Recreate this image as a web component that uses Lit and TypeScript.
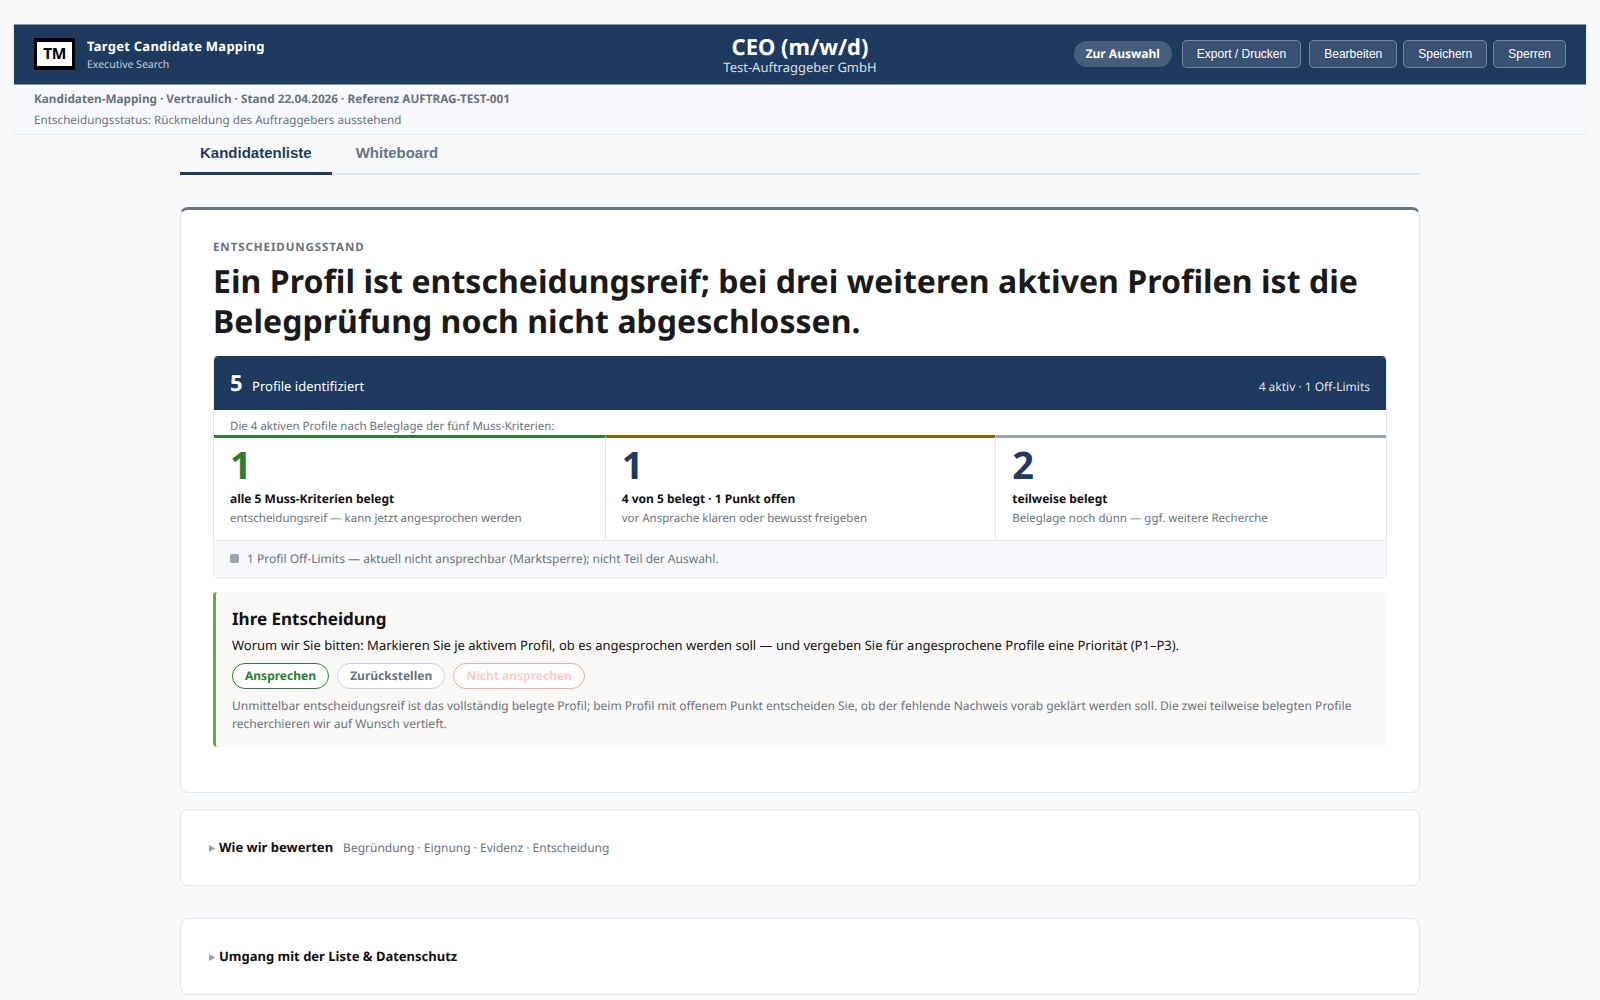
import { LitElement, html, css } from "lit";
import { customElement } from "lit/decorators.js";

const actions = ["Export / Drucken", "Bearbeiten", "Speichern", "Sperren"];

const tiers = [
  { count: 1, tone: "green", label: "alle 5 Muss-Kriterien belegt", note: "entscheidungsreif — kann jetzt angesprochen werden" },
  { count: 1, tone: "amber", label: "4 von 5 belegt · 1 Punkt offen", note: "vor Ansprache klären oder bewusst freigeben" },
  { count: 2, tone: "grey", label: "teilweise belegt", note: "Beleglage noch dünn — ggf. weitere Recherche" },
];

@customElement("app-root")
export class AppRoot extends LitElement {
  static styles = css`
    :host {
      display: block;
      box-sizing: border-box;
      height: 1000px;
      overflow: hidden;
      padding: 24px 14px 0;
      background: #f8fafc;
      color: #111;
      font-family: "Noto Sans", sans-serif;
      text-rendering: geometricPrecision;
    }
    * { box-sizing: border-box; }
    .top {
      display: grid;
      grid-template-columns: 1fr auto 1fr;
      align-items: center;
      height: 61px;
      padding: 0 20px 1px;
      border: solid #8496ac;
      border-width: 1px 0;
      background: #1e3a5f;
      color: #fff;
      box-shadow: 0 1px 3px rgba(15, 23, 42, 0.1);
    }
    .brand { display: flex; align-items: center; gap: 12px; }
    .brand-text { padding-top: 2px; }
    .logo {
      display: flex;
      align-items: center;
      justify-content: center;
      width: 41px;
      height: 32px;
      border: solid #000;
      border-width: 4px 3px;
      background: #fff;
      color: #000;
      font-size: 15.5px;
      font-weight: 700;
      line-height: 1;
      letter-spacing: -0.5px;
    }
    .brand-name { font-size: 13px; font-weight: 700; line-height: 18px; letter-spacing: 0.26px; }
    .brand-sub { margin-top: 1px; font-size: 10.5px; line-height: 18px; color: rgba(255, 255, 255, 0.75); }
    .mandate { padding-top: 3px; text-align: center; }
    .role { font-size: 22px; font-weight: 700; line-height: 24px; }
    .client { font-size: 13px; line-height: 17px; color: rgba(255, 255, 255, 0.85); }
    .actions { display: flex; align-items: center; justify-content: flex-end; gap: 6px; }
    .pill-link {
      margin-right: 4px;
      padding: 0 12px;
      border-radius: 14px;
      background: rgba(255, 255, 255, 0.18);
      font-size: 12px;
      font-weight: 700;
      line-height: 26px;
    }
    .action {
      height: 28px;
      padding: 0 14px;
      border: 1px solid rgba(255, 255, 255, 0.3);
      border-radius: 5px;
      background: rgba(255, 255, 255, 0.12);
      color: #fff;
      font: 12px "Liberation Sans", Arial, sans-serif;
    }
    .action:nth-of-type(1) { margin-right: 2px; }
    .meta {
      height: 50px;
      padding: 4px 20px 0;
      border-bottom: 1px solid #e2e8f0;
      background: #f7f9fc;
      color: #6b7280;
      font-size: 11.7px;
      line-height: 20.5px;
    }
    .meta-main { font-size: 11.75px; font-weight: 700; }
    .page { width: 1240px; margin: 0 auto; }
    .tabs { display: flex; gap: 4px; height: 40px; border-bottom: 2px solid #e2e8f0; }
    .tab {
      display: flex;
      align-items: flex-start;
      height: 40px;
      padding: 8px 20px 0;
      border: 0;
      background: none;
      color: #64748b;
      font: 700 15px/20px "Liberation Sans", Arial, sans-serif;
    }
    .tab.active { border-bottom: 3px solid #1e3a5f; color: #1e3a5f; }
    .card { border: 1px solid #e2e8f0; border-radius: 8px; background: #fff; }
    .status { margin-top: 32px; height: 586px; padding: 29px 32px 0; border-top: 3px solid #6b7280; }
    .eyebrow { color: #6b7280; font-size: 11.5px; font-weight: 700; line-height: 18px; letter-spacing: 0.93px; }
    .headline { margin: 5px 0 0; color: #1a1a1a; font-size: 32px; font-weight: 700; line-height: 40px; letter-spacing: 0.04px; }
    .funnel {
      height: 222px;
      margin-top: 14px;
      overflow: hidden;
      border: 1px solid #e2e8f0;
      border-top-color: #1e3a5f;
      border-radius: 5px;
    }
    .funnel-head {
      display: flex;
      align-items: baseline;
      height: 53px;
      padding: 11px 16px 0;
      background: #1e3a5f;
      color: #fff;
      line-height: 30px;
    }
    .total { font-size: 22px; font-weight: 700; }
    .total-label { margin-left: 9.5px; font-size: 13px; }
    .total-split { margin-left: auto; font-size: 12px; color: rgba(255, 255, 255, 0.88); }
    .funnel-intro { height: 25px; padding: 8px 16px 0; color: #6b7280; font-size: 11.5px; line-height: 17px; }
    .tiers { display: grid; grid-template-columns: repeat(3, 1fr); height: 105px; }
    .tier { padding: 8px 16px 0; border-top: 3px solid #9ca3af; }
    .tier + .tier { border-left: 1px solid #e2e8f0; }
    .tier.green { border-top-color: #2e7d32; }
    .tier.amber { border-top-color: #8f6400; }
    .tier.grey { border-top-color: #9aa3af; }
    .count { color: #1e3a5f; font-size: 38px; font-weight: 700; line-height: 38px; }
    .green .count { color: #2e7d32; }
    .tier-label { margin-top: 6px; font-size: 12px; font-weight: 700; line-height: 18px; }
    .tier-note { margin-top: 2px; color: #6b7280; font-size: 11.5px; line-height: 18px; }
    .funnel-foot {
      display: flex;
      align-items: center;
      gap: 8px;
      height: 37px;
      padding: 0 16px 1px;
      border-top: 1px solid #e2e8f0;
      background: #f7f9fc;
      color: #6b7280;
      font-size: 12px;
    }
    .swatch { width: 9px; height: 9px; border-radius: 2px; background: #9ca3af; }
    .decision {
      height: 155px;
      margin-top: 14px;
      padding: 15px 16px 0;
      border-left: 3px solid #6aa84f;
      border-radius: 4px;
      background: #faf9f7;
    }
    .decision-title { margin: 0; font-size: 17px; font-weight: 700; line-height: 24px; }
    .ask { margin: 4px 0 0; font-size: 13px; line-height: 21px; }
    .options { display: flex; gap: 8.2px; margin-top: 7px; }
    .option {
      padding: 0 12px;
      border: 1px solid #cbd5e1;
      border-radius: 13px;
      background: #fff;
      color: #6b7280;
      font-size: 12px;
      font-weight: 700;
      line-height: 24px;
    }
    .option.yes { border-color: #2e7d32; color: #2e7d32; }
    .option.no { border-color: #fca5a5; color: #fecaca; }
    .advice { margin: 8px 0 0; color: #6b7280; font-size: 12px; line-height: 18.2px; }
    .fold { display: flex; align-items: center; height: 77px; padding: 0 28px 1px; }
    .fold.first { margin-top: 16px; }
    .fold.second { margin-top: 32px; }
    .marker { width: 6.5px; height: 7px; margin: 2px 3.5px 0 0; fill: #9ca3af; }
    .fold-title { font-size: 13px; font-weight: 700; }
    .fold-sub { margin-left: 10px; color: #6b7280; font-size: 12px; }
  `;

  private marker() {
    return html`<svg class="marker" viewBox="0 0 6.5 7"><path d="M0 0L6.5 3.5L0 7Z" /></svg>`;
  }

  render() {
    return html`
      <header class="top">
        <div class="brand">
          <div class="logo">TM</div>
          <div class="brand-text">
            <div class="brand-name">Target Candidate Mapping</div>
            <div class="brand-sub">Executive Search</div>
          </div>
        </div>
        <div class="mandate">
          <div class="role">CEO (m/w/d)</div>
          <div class="client">Test-Auftraggeber GmbH</div>
        </div>
        <div class="actions">
          <span class="pill-link">Zur Auswahl</span>
          ${actions.map((a) => html`<button class="action">${a}</button>`)}
        </div>
      </header>
      <div class="meta">
        <div class="meta-main">Kandidaten-Mapping · Vertraulich · Stand 22.04.2026 · Referenz AUFTRAG-TEST-001</div>
        <div>Entscheidungsstatus: Rückmeldung des Auftraggebers ausstehend</div>
      </div>
      <main class="page">
        <nav class="tabs">
          <button class="tab active">Kandidatenliste</button>
          <button class="tab">Whiteboard</button>
        </nav>
        <section class="card status">
          <div class="eyebrow">ENTSCHEIDUNGSSTAND</div>
          <h1 class="headline">
            Ein Profil ist entscheidungsreif; bei drei weiteren aktiven Profilen ist die Belegprüfung noch nicht abgeschlossen.
          </h1>
          <div class="funnel">
            <div class="funnel-head">
              <span class="total">5</span>
              <span class="total-label">Profile identifiziert</span>
              <span class="total-split">4 aktiv · 1 Off-Limits</span>
            </div>
            <div class="funnel-intro">Die 4 aktiven Profile nach Beleglage der fünf Muss-Kriterien:</div>
            <div class="tiers">
              ${tiers.map(
                (t) => html`<div class="tier ${t.tone}">
                  <div class="count">${t.count}</div>
                  <div class="tier-label">${t.label}</div>
                  <div class="tier-note">${t.note}</div>
                </div>`
              )}
            </div>
            <div class="funnel-foot">
              <span class="swatch"></span>
              <span>1 Profil Off-Limits — aktuell nicht ansprechbar (Marktsperre); nicht Teil der Auswahl.</span>
            </div>
          </div>
          <div class="decision">
            <h2 class="decision-title">Ihre Entscheidung</h2>
            <p class="ask">
              Worum wir Sie bitten: Markieren Sie je aktivem Profil, ob es angesprochen werden soll — und vergeben Sie für angesprochene Profile eine Priorität (P1–P3).
            </p>
            <div class="options">
              <span class="option yes">Ansprechen</span>
              <span class="option">Zurückstellen</span>
              <span class="option no">Nicht ansprechen</span>
            </div>
            <p class="advice">
              Unmittelbar entscheidungsreif ist das vollständig belegte Profil; beim Profil mit offenem Punkt entscheiden Sie, ob der fehlende Nachweis vorab geklärt werden soll. Die zwei teilweise belegten Profile recherchieren wir auf Wunsch vertieft.
            </p>
          </div>
        </section>
        <section class="card fold first">
          ${this.marker()}
          <span class="fold-title">Wie wir bewerten</span>
          <span class="fold-sub">Begründung · Eignung · Evidenz · Entscheidung</span>
        </section>
        <section class="card fold second">
          ${this.marker()}
          <span class="fold-title">Umgang mit der Liste &amp; Datenschutz</span>
        </section>
      </main>
    `;
  }
}
